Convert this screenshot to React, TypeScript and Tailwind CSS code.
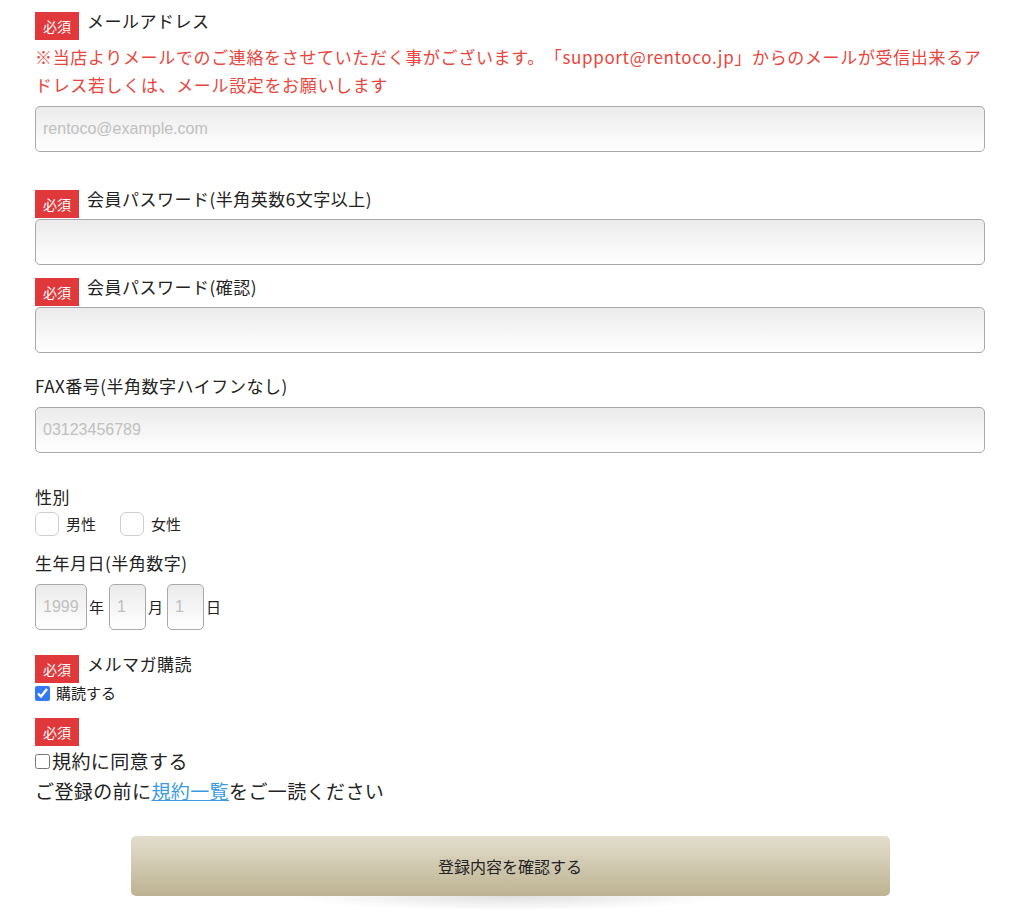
import React from 'react';

const font = { fontFamily: '"Noto Sans CJK JP", "Noto Sans", sans-serif' };

const Badge = () => (
  <span className="inline-flex h-[28px] w-[44px] shrink-0 items-center justify-center bg-[#e0383b] text-[14px] leading-none text-white">
    必須
  </span>
);

const Label = ({ children, required }: { children: React.ReactNode; required?: boolean }) => (
  <div className="flex items-start">
    {required && <Badge />}
    <span
      className={
        required
          ? 'ml-[8px] text-[17px] leading-[18px] tracking-[0.5px] text-[#222]'
          : 'text-[17px] leading-[24px] tracking-[0.5px] text-[#222]'
      }
    >
      {children}
    </span>
  </div>
);

const TextInput = ({ placeholder, className = '' }: { placeholder?: string; className?: string }) => (
  <input
    placeholder={placeholder}
    className={
      'block h-[46px] rounded-[5px] border border-[#a9a9a9] bg-gradient-to-b from-[#ebebeb] to-white px-[7px] text-[16px] text-[#333] outline-none placeholder:text-[#c0c0c0] ' +
      className
    }
    style={{ fontFamily: '"Liberation Sans", Arial, sans-serif' }}
  />
);

export default function App() {
  return (
    <div className="min-h-[911px] bg-white [text-spacing-trim:space-all]" style={font}>
      <div className="ml-[35px] w-[950px] pt-[12px]">
        {/* email */}
        <Label required>メールアドレス</Label>
        <p className="mt-[3px] text-[17px] leading-[28px] tracking-[0.65px] text-[#e8453c]">
          ※当店よりメールでのご連絡をさせていただく事がございます。「support@rentoco.jp」からのメールが受信出来るアドレス若しくは、メール設定をお願いします
        </p>
        <TextInput placeholder="rentoco@example.com" className="mt-[7px] w-[950px]" />

        {/* password */}
        <div className="mt-[38px]">
          <Label required>会員パスワード(半角英数6文字以上)</Label>
        </div>
        <TextInput className="mt-[1px] w-[950px]" />

        <div className="mt-[13px]">
          <Label required>会員パスワード(確認)</Label>
        </div>
        <TextInput className="mt-[1px] w-[950px]" />

        {/* fax */}
        <div className="mt-[21px]">
          <Label>FAX番号(半角数字ハイフンなし)</Label>
        </div>
        <TextInput placeholder="03123456789" className="mt-[9px] w-[950px]" />

        {/* gender */}
        <div className="mt-[32px]">
          <Label>性別</Label>
        </div>
        <div className="mt-[3px] flex items-center text-[15px] text-[#222]">
          <span className="h-[24px] w-[24px] rounded-[6px] border border-[#cfcfcf] bg-white" />
          <span className="ml-[7px]">男性</span>
          <span className="ml-[24px] h-[24px] w-[24px] rounded-[6px] border border-[#cfcfcf] bg-white" />
          <span className="ml-[7px]">女性</span>
        </div>

        {/* birthday */}
        <div className="mt-[15px]">
          <Label>生年月日(半角数字)</Label>
        </div>
        <div className="mt-[9px] flex items-center text-[15px] text-[#222]">
          <TextInput placeholder="1999" className="w-[52px]" />
          <span className="ml-[2px]">年</span>
          <TextInput placeholder="1" className="ml-[5px] w-[37px]" />
          <span className="ml-[2px]">月</span>
          <TextInput placeholder="1" className="ml-[4px] w-[37px]" />
          <span className="ml-[2px]">日</span>
        </div>

        {/* mail magazine */}
        <div className="mt-[25px]">
          <Label required>メルマガ購読</Label>
        </div>
        <label className="mt-[2px] flex items-center text-[15px] leading-[16px] text-[#222]">
          <input type="checkbox" defaultChecked className="m-0 h-[15px] w-[15px] accent-[#3478f6]" />
          <span className="ml-[6px]">購読する</span>
        </label>

        {/* terms */}
        <div className="mt-[17px]">
          <Badge />
        </div>
        <label className="flex items-center text-[19px] leading-[30px] tracking-[0.4px] text-[#222]">
          <input type="checkbox" className="m-0 h-[15px] w-[15px]" />
          <span className="ml-[2px]">規約に同意する</span>
        </label>
        <p className="text-[19px] leading-[30px] tracking-[0.4px] text-[#222]">
          ご登録の前に
          <a href="#" className="text-[#3a9be0] underline">
            規約一覧
          </a>
          をご一読ください
        </p>

        {/* submit */}
        <button className="mx-auto mt-[30px] block h-[60px] w-[759px] rounded-[5px] bg-gradient-to-b from-[#e3decd] to-[#bdb392] text-[16px] text-[#222]">
          登録内容を確認する
        </button>
        <div className="mx-auto h-[15px] w-[440px] bg-[radial-gradient(ellipse_at_top,rgba(0,0,0,0.12),rgba(0,0,0,0)_70%)]" />
      </div>
    </div>
  );
}
